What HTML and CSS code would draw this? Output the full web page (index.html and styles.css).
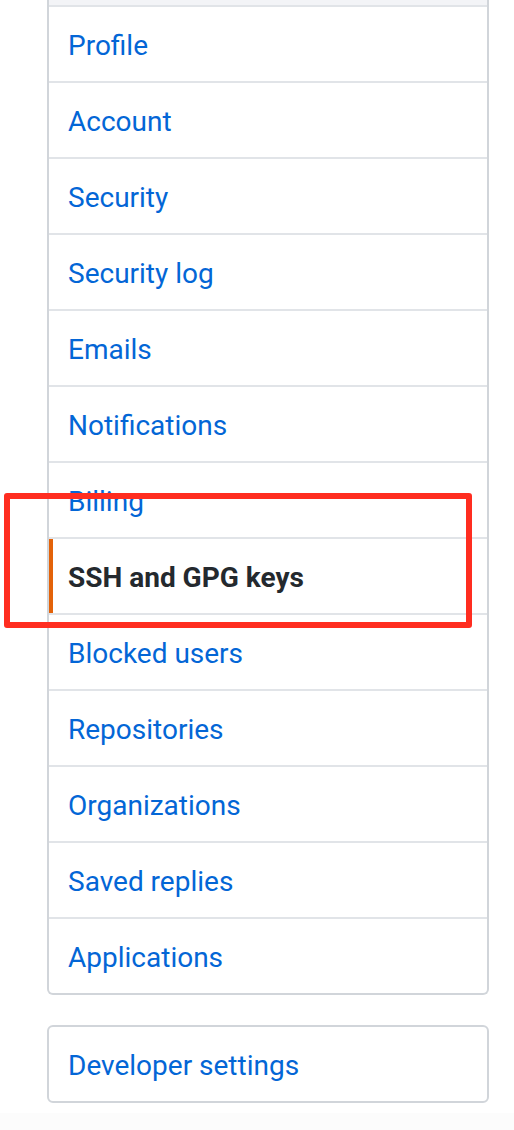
FILE: index.html
```html
<!DOCTYPE html>
<html>
<head>
<meta charset="utf-8">
<link rel="stylesheet" href="styles.css">
</head>
<body>
<div class="page">
  <nav class="menu">
    <div class="menu-heading"></div>
    <a class="menu-item" href="#">Profile</a>
    <a class="menu-item" href="#">Account</a>
    <a class="menu-item" href="#">Security</a>
    <a class="menu-item" href="#">Security log</a>
    <a class="menu-item" href="#">Emails</a>
    <a class="menu-item" href="#">Notifications</a>
    <a class="menu-item" href="#">Billing</a>
    <a class="menu-item selected" href="#">SSH and GPG keys</a>
    <a class="menu-item" href="#">Blocked users</a>
    <a class="menu-item" href="#">Repositories</a>
    <a class="menu-item" href="#">Organizations</a>
    <a class="menu-item" href="#">Saved replies</a>
    <a class="menu-item" href="#">Applications</a>
  </nav>
  <nav class="menu menu-dev">
    <a class="menu-item" href="#">Developer settings</a>
  </nav>
  <div class="highlight"></div>
</div>
<div class="footer-bg"></div>
</body>
</html>
```
FILE: styles.css
```css
html, body {
  margin: 0;
  padding: 0;
  background: #ffffff;
}
body {
  font-family: Roboto, Inter, "Liberation Sans", Arial, sans-serif;
  width: 514px;
}
.page {
  position: relative;
  padding-left: 47px;
  padding-bottom: 10px;
}
.menu {
  width: 442px;
  box-sizing: border-box;
  border: 2px solid #d1d5da;
  border-top: none;
  border-radius: 0 0 6px 6px;
  background: #fff;
  display: flex;
  flex-direction: column;
}
.menu-heading {
  height: 5px;
  background: #f3f4f7;
}
.menu-item {
  display: block;
  padding: 18px 20px 14px 19px;
  line-height: 42px;
  font-size: 28px;
  color: #0366d6;
  text-decoration: none;
  border-top: 2px solid #e1e4e8;
  position: relative;
}
.menu-item.selected {
  color: #24292e;
  font-weight: 700;
}
.menu-item.selected::before {
  content: "";
  position: absolute;
  left: 0;
  top: 0;
  bottom: 0;
  width: 4px;
  background: #e36209;
}
.menu-dev {
  margin-top: 30px;
  border-top: 2px solid #d1d5da;
  border-radius: 6px;
}
.menu-dev .menu-item {
  border-top: none;
}
.highlight {
  position: absolute;
  left: 4px;
  top: 493px;
  width: 468px;
  height: 135px;
  box-sizing: border-box;
  border: 6px solid #ff2d20;
  border-radius: 3px;
}
.footer-bg {
  height: 30px;
  background: #fcfcfc;
}
```
